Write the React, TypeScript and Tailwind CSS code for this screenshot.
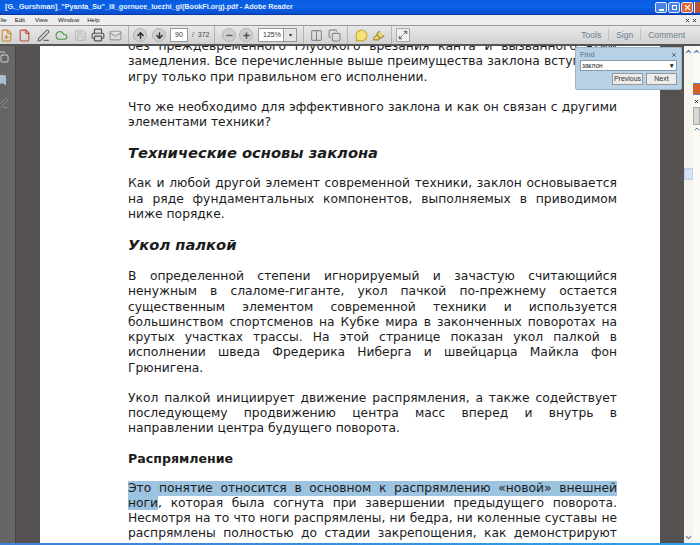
import React from "react";
import { ArrowUp, ArrowDown, Minus, Plus, ChevronDown, ChevronUp, Printer, Mail, Save, Copy, Bookmark, PenLine, X, Maximize2, Columns2, MessageCircle, Highlighter, Cloud, File, FilePlus } from "lucide-react";

const J = ({ children }: { children: React.ReactNode }) => (
  <div className="[text-align-last:justify] whitespace-nowrap">{children}</div>
);
const L = ({ children }: { children: React.ReactNode }) => <div className="whitespace-nowrap">{children}</div>;
const H = ({ children }: { children: React.ReactNode }) => (
  <div className="text-[14.7px] font-bold italic leading-[20px] mt-[13px] mb-[13px]">{children}</div>
);

const Round = ({ children }: { children: React.ReactNode }) => (
  <div className="w-[14px] h-[14px] rounded-full bg-[#cfcfcf] border border-[#b4b4b4] flex items-center justify-center text-[#333]">{children}</div>
);
const Sep = () => <div className="w-px h-[18px] bg-[#b4b4b4]" />;
const Ic = ({ children, w = 18 }: { children: React.ReactNode; w?: number }) => (
  <div className="flex items-center justify-center shrink-0" style={{ width: w }}>{children}</div>
);

export default function App() {
  return (
    <div className="w-[700px] h-[545px] overflow-hidden relative flex flex-col bg-white font-['Liberation_Sans',sans-serif]">
      <div className="h-[15px] shrink-0 flex items-center justify-between bg-gradient-to-b from-[#0a5ce0] via-[#0a62e8] to-[#0a4ccc] pl-[5px] border-b border-[#0a3aa0]">
        <span className="text-[#e8f0ff] font-bold text-[7.2px] whitespace-nowrap">[G._Gurshman]_"Pyanta_Su"_ili_gornuee_luezhi_gl(BookFi.org).pdf - Adobe Reader</span>
        <div className="flex items-center gap-px">
          <div className="w-[12px] h-[11px] rounded-[2px] bg-[#4a82e4] border border-[#dfe8fa] flex items-end justify-center pb-px"><div className="w-[5px] h-[2px] bg-white" /></div>
          <div className="w-[12px] h-[11px] rounded-[2px] bg-[#4a82e4] border border-[#dfe8fa] flex items-center justify-center"><div className="w-[5px] h-[5px] border border-white" /></div>
          <div className="w-[12px] h-[11px] rounded-[2px] bg-[#e4622e] border border-[#dfe8fa] flex items-center justify-center"><X size={9} color="white" strokeWidth={3} /></div>
          <div className="w-[6px] h-[11px] bg-[#c0502e] border-l border-white" />
        </div>
      </div>
      <div className="h-[10px] shrink-0 flex items-center justify-between bg-[#ededed] text-[6px] text-[#222] pr-[3px] overflow-hidden">
        <div className="flex gap-[8px] -ml-[3px]"><span>File</span><span>Edit</span><span className="ml-[2px]">View</span><span className="ml-[2px]">Window</span><span>Help</span></div>
        <div className="flex gap-[2px] text-[#222]"><X size={5} strokeWidth={4} /><X size={5} strokeWidth={4} /></div>
      </div>
      <div className="h-[21px] shrink-0 flex items-center bg-gradient-to-b from-[#e8e8e8] to-[#d2d2d2] border-t border-[#999] border-b-2 border-b-[#555] relative z-10">
        <div className="flex items-center -ml-[3px]">
          <Ic><FilePlus size={13} color="#c88a30" /></Ic>
          <Ic w={19}><File size={13} color="#c04a3a" /></Ic>
          <Ic><PenLine size={13} color="#666" /></Ic>
          <Ic w={19}><Cloud size={13} color="#4a9a4a" /></Ic>
          <Ic><Save size={13} color="#bbb" /></Ic>
          <Ic w={17}><Printer size={14} color="#555" /></Ic>
          <Ic w={18}><Mail size={13} color="#999" /></Ic>
        </div>
        <div className="ml-[4px] mr-[4px]"><Sep /></div>
        <div className="flex items-center gap-[5px]">
          <Round><ArrowUp size={9} strokeWidth={4} /></Round>
          <Round><ArrowDown size={9} strokeWidth={4} /></Round>
        </div>
        <div className="ml-[4px] w-[18px] h-[14px] bg-white border border-[#999] text-[7px] text-[#333] flex items-center justify-center">90</div>
        <span className="ml-[4px] w-[17px] text-[7px] text-[#444] whitespace-nowrap">/ &nbsp;372</span>
        <div className="ml-[5px] mr-[7px]"><Sep /></div>
        <div className="flex items-center gap-[3px]">
          <Round><Minus size={9} strokeWidth={4} color="#666" /></Round>
          <Round><Plus size={9} strokeWidth={4} color="#555" /></Round>
        </div>
        <div className="ml-[5px] w-[26px] h-[14px] bg-white border border-[#999] text-[7px] text-[#333] flex items-center pl-[4px]">125%</div>
        <div className="w-[13px] h-[14px] bg-[#e4e4e4] border border-[#999] border-l-0 flex items-center justify-center text-[6px] text-[#333]">▾</div>
        <div className="ml-[6px] mr-[3px]"><Sep /></div>
        <div className="flex items-center">
          <Ic><Columns2 size={13} color="#888" /></Ic>
          <Ic><Copy size={13} color="#888" /></Ic>
        </div>
        <div className="ml-[4px] mr-[5px]"><Sep /></div>
        <div className="flex items-center gap-px">
          <Ic w={16}><MessageCircle size={13} color="#c9a82a" fill="#f3e27a" /></Ic>
          <Ic w={16}><Highlighter size={13} color="#a08a30" fill="#e8d778" /></Ic>
        </div>
        <div className="ml-[5px] mr-[4px]"><Sep /></div>
        <div className="w-[14px] h-[14px] bg-[#f0f0f0] border border-[#aaa] flex items-center justify-center"><Maximize2 size={10} color="#444" /></div>
        <div className="ml-auto flex items-center h-full text-[8.5px] text-[#6a7f8f] pr-[15px]">
          <span className="pr-[7px]">Tools</span>
          <span className="pl-[7px] pr-[7px] border-l border-[#c0c0c0]">Sign</span>
          <span className="pl-[7px] border-l border-[#c0c0c0]">Comment</span>
        </div>
      </div>
      <div className="flex-1 flex min-h-0">
        <div className="w-[16px] shrink-0 bg-[#666] flex flex-col items-start gap-[11px] pt-[5px] border-r border-[#444] overflow-hidden">
          <div className="-ml-[3px]"><Copy size={12} color="#cfcfcf" /></div>
          <div className="-ml-[4px]"><Bookmark size={12} color="#a9c0d0" fill="#a9c0d0" /></div>
          <div className="-ml-[3px]"><PenLine size={12} color="#8a8a8a" /></div>
        </div>
        <div className="w-[24px] shrink-0 bg-[#545150]" />
        <div className="w-[620px] shrink-0 bg-white overflow-hidden pl-[88px] pr-[43px] font-['DejaVu_Sans',sans-serif] text-[12.3px] leading-[15.25px] text-[#1c1c1c]">
          <div className="-mt-[7px]">
            <J>без преждевременного глубокого врезания канта и вызванного этим</J>
            <J>замедления. Все перечисленные выше преимущества заклона вступают в</J>
            <L>игру только при правильном его исполнении.</L>
            <div className="h-[15px]" />
            <J>Что же необходимо для эффективного заклона и как он связан с другими</J>
            <L>элементами техники?</L>
            <H>Технические основы заклона</H>
            <J>Как и любой другой элемент современной техники, заклон основывается</J>
            <J>на ряде фундаментальных компонентов, выполняемых в приводимом</J>
            <L>ниже порядке.</L>
            <H>Укол палкой</H>
            <div className="h-px" />
            <J>В определенной степени игнорируемый и зачастую считающийся</J>
            <J>ненужным в слаломе-гиганте, укол пачкой по-прежнему остается</J>
            <J>существенным элементом современной техники и используется</J>
            <J>большинством спортсменов на Кубке мира в законченных поворотах на</J>
            <J>крутых участках трассы. На этой странице показан укол палкой в</J>
            <J>исполнении шведа Фредерика Ниберга и швейцарца Майкла фон</J>
            <L>Грюнигена.</L>
            <div className="h-[15px]" />
            <J>Укол палкой инициирует движение распрямления, а также содействует</J>
            <J>последующему продвижению центра масс вперед и внутрь в</J>
            <L>направлении центра будущего поворота.</L>
            <div className="text-[12.6px] font-bold leading-[20px] mt-[12px] mb-[12px]">Распрямление</div>
            <div className="bg-[#9cc3e0]"><J>Это понятие относится в основном к распрямлению «новой» внешней</J></div>
            <J><span className="bg-[#9cc3e0]">ноги</span>, которая была согнута при завершении предыдущего поворота.</J>
            <J>Несмотря на то что ноги распрямлены, ни бедра, ни коленные суставы не</J>
            <J>распрямлены полностью до стадии закрепощения, как демонстрируют</J>
          </div>
        </div>
        <div className="w-[24px] shrink-0 bg-[#545150]" />
        <div className="w-[9px] shrink-0 bg-[#f6f5ee] flex flex-col items-center justify-between pb-[1px] pt-[1px]">
          <div className="w-full flex flex-col items-center">
            <ChevronUp size={9} color="#5a7fb8" strokeWidth={3} />
            <div className="mt-[112px] w-[9px] h-[12px] bg-[#d6e2f6] border border-[#c4d3ea]" />
          </div>
          <ChevronDown size={9} color="#5a7fb8" strokeWidth={3} />
        </div>
        <div className="w-[7px] shrink-0 bg-[#fbfaf4] flex flex-col items-center pt-[1px]">
          <ChevronUp size={9} color="#5a7fb8" strokeWidth={3} />
          <div className="mt-[27px] w-[7px] h-[12px] bg-[#d4602e] border-t border-b border-[#5a7fb8]" />
          <div className="mt-[4px]"><X size={5} strokeWidth={4} color="#222" /></div>
          <div className="mt-[3px] w-[7px] h-[18px] bg-[#d8d8d8] border border-[#aaa]" />
          <ChevronUp size={8} color="#5a7fb8" strokeWidth={3} />
        </div>
      </div>
      <div className="h-[2px] shrink-0 bg-gradient-to-r from-[#3f80d8] to-[#28a0e8]" />
      <div className="absolute left-[575px] top-[47px] w-[107px] h-[43px] bg-[#b7d2e6] border border-[#9ab4c8] rounded-b-[2px] pl-[4px] pr-[4px] z-20">
        <div className="flex justify-between items-center h-[12px] pt-[1px] text-[7.5px] text-[#5a6a76]"><span>Find</span><X size={6} color="#444" strokeWidth={3} /></div>
        <div className="h-[11px] bg-white border border-[#8a9aa8] flex items-center justify-between px-[1px] text-[6.5px] text-[#222]"><span>заклон</span><span>▼</span></div>
        <div className="flex justify-end gap-[3px] mt-[2px] text-[7px] text-[#333]">
          <div className="w-[31px] h-[12px] bg-[#ececec] border border-[#999] flex items-center justify-center">Previous</div>
          <div className="w-[31px] h-[12px] bg-[#ececec] border border-[#999] flex items-center justify-center">Next</div>
        </div>
      </div>
    </div>
  );
}
